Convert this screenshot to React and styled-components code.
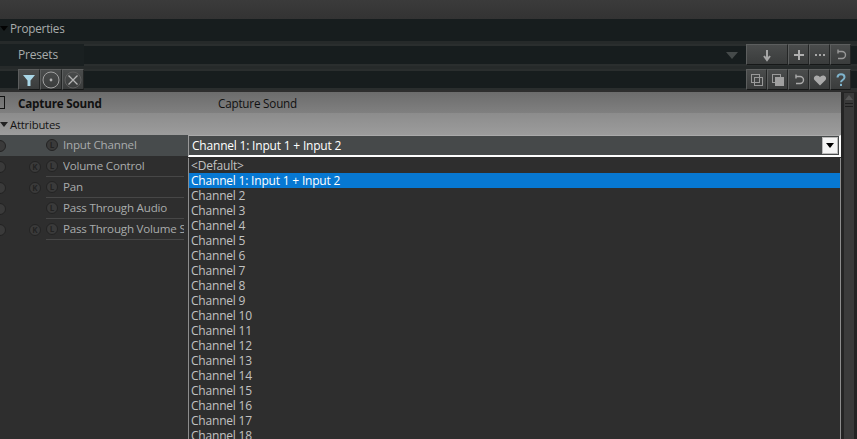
import React from 'react';
import styled, { createGlobalStyle } from 'styled-components';

const Global = createGlobalStyle`
  html, body { margin: 0; padding: 0; background: #2e2e2e; overflow: hidden; }
  #root { width: 857px; height: 439px; overflow: hidden; }
  * { box-sizing: border-box; }
`;
const Page = styled.div`
  position: relative; width: 857px; height: 439px; overflow: hidden;
  font: 12px "Open Sans", "Noto Sans", sans-serif; letter-spacing: -0.2px; color: #c4c4c4;
  display: flex; flex-direction: column; background: #2e2e2e;
`;
const TopBar = styled.div`height: 19px; flex: none; background: linear-gradient(#3b3b3b, #333);`;
const Header = styled.div`
  height: 22px; flex: none; background: #171d1e; display: flex; align-items: center; gap: 2px;
  padding-bottom: 4px; color: #a8acac; font-size: 11.7px;
`;
const Caret = styled.span`
  width: 0; height: 0; border-left: 4px solid transparent; border-right: 4px solid transparent;
  border-top: 5px solid ${p => p.$c || '#030303'};
`;
const Gap = styled.div`height: ${p => p.$h}px; flex: none; background: #262a2a;`;
const PresetRow = styled.div`
  height: 22px; flex: none; display: flex; align-items: flex-start; justify-content: flex-end; padding-right: 6px;
  background: linear-gradient(#2a2e2e 2px, #171d1e 2px, #171d1e 20px, #2a2e2e 20px);
`;
const PresetTab = styled.div`
  width: 84px; height: 22px; background: #1a2021; padding: 2px 0 0 18px; color: #a8acac; margin-right: auto;
`;
const PresetArrow = styled.span`
  margin: 8px 8px 0 0; width: 0; height: 0; border-left: 6px solid transparent; border-right: 6px solid transparent;
  border-top: 7px solid #454a4a;
`;
const ToolRow = styled.div`
  height: 21px; flex: none; display: flex; align-items: center; padding: 0 6px 0 18px;
  background: linear-gradient(#2a2e2e 2px, #171d1e 2px, #171d1e 19px, #2a2e2e 19px);
`;
const Spacer = styled.div`flex: 1;`;
const IconBtn = styled.div`
  width: ${p => p.$w || 21}px; height: 21px; flex: none; display: flex; align-items: center; justify-content: center;
  background: linear-gradient(#4a4c4c, #3a3c3c); border: 1px solid #5c5e5e; border-right-color: #242626; border-bottom-color: #161818;
`;
const Sheet = styled.div`
  flex: 1; display: flex; min-height: 0; margin-top: 2px;
`;
const Main = styled.div`flex: 1; min-width: 0; display: flex; flex-direction: column;`;
const ScrollTrack = styled.div`
  width: 16px; flex: none; background: #242424; display: flex; justify-content: flex-start; padding: 1px 0 0 3px;
`;
const Thumb = styled.div`
  width: 10px; height: 100%; background: #3a3a3a; display: flex; flex-direction: column; align-items: center; padding-top: 2px; gap: 2px;
`;
const UpArrow = styled.span`
  width: 0; height: 0; border-left: 4px solid transparent; border-right: 4px solid transparent; border-bottom: 5px solid #555; margin-bottom: 1px;
`;
const Grip = styled.span`width: 8px; height: 1px; background: #1f1f1f; flex: none;`;
const NodeRow = styled.div`
  height: 21px; flex: none; background: linear-gradient(#6c6c6c, #808080); display: flex; align-items: center; color: #111; font-size: 11.7px;
`;
const Check = styled.span`
  width: 5px; height: 13px; border: 1px solid #111; border-left: none; margin-right: 13px; flex: none;
`;
const NodeName = styled.span`width: 200px; font-weight: 700; flex: none;`;
const AttrRow = styled.div`
  height: 22px; flex: none; background: linear-gradient(#8c8c8c, #9c9c9c); display: flex; align-items: center; gap: 2px; color: #141414; font-size: 11.3px;
`;
const Row = styled.div`
  height: 21px; flex: none; display: flex; align-items: center; background: ${p => p.$active ? '#474b4c' : 'transparent'};
`;
const Dot = styled.span`
  width: 12px; height: 12px; border-radius: 50%; flex: none; background: #3a3a3a; border: 1px solid #232323; color: #232323;
  font-size: 8px; line-height: 10px; text-align: center; font-weight: 700; letter-spacing: 0;
  visibility: ${p => p.$hidden ? 'hidden' : 'visible'};
`;
const FirstDot = styled(Dot)`margin-left: -6px;`;
const KeyDot = styled(Dot)`margin-left: 23px;`;
const Cell = styled.div`
  margin-left: 5px; height: 21px; flex: none; width: 138px; display: flex; align-items: center; gap: 5px;
  border-bottom: 1px solid ${p => p.$active ? 'transparent' : '#474747'};
`;
const Label = styled.span`
  flex: 1; min-width: 0; white-space: nowrap; overflow: hidden; color: #a9acac; line-height: 20px; font-size: 11.6px;
`;
const Select = styled.div`
  position: absolute; left: 188px; top: 135px; width: 653px; height: 22px; background: #46494a;
  border: 2px solid #fff; border-left: 1px solid #999; border-top: 1px solid #aaa;
  display: flex; align-items: center; justify-content: space-between; padding-left: 3px; color: #fff;
`;
const SelectBtn = styled.div`
  width: 16px; height: 17px; background: #f4f4f4; border: 1px solid #bbb; display: flex; align-items: center; justify-content: center; margin-right: 1px;
`;
const Menu = styled.div`
  position: absolute; left: 188px; top: 158px; width: 653px; height: 290px; background: #2e2e2e; border-left: 1px solid #8c8c8c; border-right: 1px solid #8c8c8c;
`;
const Option = styled.div`
  height: 15px; line-height: 15px; padding-left: 2px; color: ${p => p.$sel ? '#fff' : '#c2c2c2'}; background: ${p => p.$sel ? '#0778d2' : 'transparent'}; white-space: nowrap;
`;

const Ico = ({ children }) => <svg width="14" height="14" viewBox="0 0 14 14" fill="none">{children}</svg>;
const channels = Array.from({ length: 17 }, (_, i) => `Channel ${i + 2}`);
const rows = [
  ['Input Channel', false, true],
  ['Volume Control', true],
  ['Pan', true],
  ['Pass Through Audio', false],
  ['Pass Through Volume S', true],
];

export default function App() {
  return (
    <Page>
      <Global />
      <TopBar />
      <Header><Caret />Properties</Header>
      <Gap $h={3} />
      <PresetRow>
        <PresetTab>Presets</PresetTab>
        <PresetArrow />
        <IconBtn $w={42}><Ico><path d="M7 2v9M4 8l3 4 3-4" stroke="#a6a6a6" strokeWidth="2" /></Ico></IconBtn>
        <IconBtn><Ico><path d="M7 2v10M2 7h10" stroke="#b0b0b0" strokeWidth="2" /></Ico></IconBtn>
        <IconBtn><Ico><path d="M2 7h2M6 7h2M10 7h2" stroke="#a8a8a8" strokeWidth="2" /></Ico></IconBtn>
        <IconBtn><Ico><path d="M4 3.5h4a3.5 3.5 0 0 1 0 7H4M4 1.5v4" stroke="#999" strokeWidth="1.4" /></Ico></IconBtn>
      </PresetRow>
      <Gap $h={3} />
      <ToolRow>
        <IconBtn $w={22}><Ico><path d="M1 2h12L8.5 7.5V13h-3V7.5z" fill="#a9d6e6" /></Ico></IconBtn>
        <IconBtn $w={22}><svg width="18" height="18" viewBox="0 0 18 18" fill="none"><circle cx="9" cy="9" r="8" stroke="#a0a0a0" /><circle cx="9" cy="9" r="1.4" fill="#b0b0b0" /></svg></IconBtn>
        <IconBtn $w={22}><svg width="18" height="18" viewBox="0 0 18 18" fill="none"><circle cx="9" cy="9" r="8" stroke="#5e5e5e" /><path d="M4.5 4.5l9 9M13.5 4.5l-9 9" stroke="#b4b4b4" strokeWidth="1.3" /></svg></IconBtn>
        <Spacer />
        <IconBtn><Ico><rect x="1.5" y="1.5" width="8" height="8" stroke="#999" /><rect x="4.5" y="4.5" width="8" height="8" stroke="#999" /></Ico></IconBtn>
        <IconBtn><Ico><rect x="1.5" y="1.5" width="8" height="8" stroke="#999" /><rect x="4" y="4" width="9" height="9" fill="#a0a0a0" /></Ico></IconBtn>
        <IconBtn><Ico><path d="M4 3.5h4a3.5 3.5 0 0 1 0 7H4M4 1.5v4" stroke="#aaa" strokeWidth="1.4" /></Ico></IconBtn>
        <IconBtn><Ico><path d="M7 12.5L1.5 7C0 5 1.5 2.5 4 2.5c1.4 0 2.4.8 3 1.8.6-1 1.6-1.8 3-1.8 2.5 0 4 2.5 2.5 4.5z" fill="#aaa" /></Ico></IconBtn>
        <IconBtn><Ico><path d="M3.5 4.5C3.5 2.5 5 1.2 7 1.2s3.5 1.2 3.5 3c0 2.6-3.5 2.8-3.5 5" stroke="#7fb4cd" strokeWidth="2" /><rect x="6" y="10.8" width="2" height="2.2" fill="#7fb4cd" /></Ico></IconBtn>
      </ToolRow>
      <Sheet>
        <Main>
          <NodeRow><Check /><NodeName>Capture Sound</NodeName><span>Capture Sound</span></NodeRow>
          <AttrRow><Caret $c="#222" />Attributes</AttrRow>
          {rows.map(([label, key, active]) => (
            <Row key={label} $active={active}>
              <FirstDot />
              <KeyDot $hidden={!key}>K</KeyDot>
              <Cell $active={active}>
                <Dot>L</Dot>
                <Label>{label}</Label>
              </Cell>
            </Row>
          ))}
        </Main>
        <ScrollTrack>
          <Thumb><UpArrow /><Grip /><Grip /></Thumb>
        </ScrollTrack>
      </Sheet>
      <Select>
        <span>Channel 1: Input 1 + Input 2</span>
        <SelectBtn><Caret $c="#000" /></SelectBtn>
      </Select>
      <Menu>
        <Option>&lt;Default&gt;</Option>
        <Option $sel>Channel 1: Input 1 + Input 2</Option>
        {channels.map(c => <Option key={c}>{c}</Option>)}
      </Menu>
    </Page>
  );
}
